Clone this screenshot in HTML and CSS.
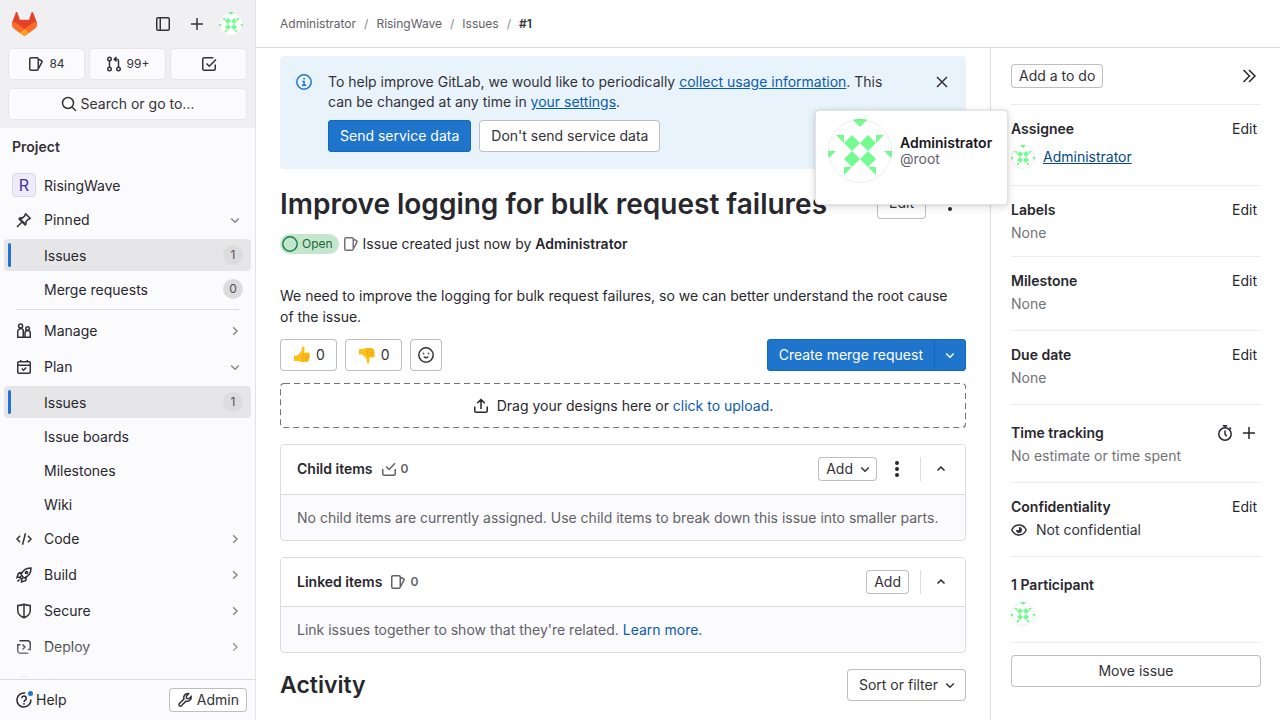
FILE: index.html
```html
<!DOCTYPE html>
<html lang="en">
<head>
<meta charset="utf-8">
<title>Improve logging for bulk request failures (#1) · Issues · RisingWave</title>
<link rel="stylesheet" href="styles.css">
</head>
<body>
<svg class="defs" aria-hidden="true">
  <symbol id="logo" viewBox="0 0 25 24"><path d="m24.507 9.5-.034-.09L21.082.562a.896.896 0 0 0-1.694.091l-2.29 7.01H7.825L5.535.653a.898.898 0 0 0-1.694-.09L.451 9.411.416 9.5a6.297 6.297 0 0 0 2.09 7.278l.012.01.03.022 5.16 3.867 2.56 1.935 1.554 1.176a1.051 1.051 0 0 0 1.268 0l1.555-1.176 2.56-1.935 5.197-3.89.014-.01A6.297 6.297 0 0 0 24.507 9.5Z" fill="#E24329"/><path d="m24.507 9.5-.034-.09a11.44 11.44 0 0 0-4.56 2.051l-7.447 5.632 4.742 3.584 5.197-3.89.014-.01A6.297 6.297 0 0 0 24.507 9.5Z" fill="#FC6D26"/><path d="m7.707 20.677 2.56 1.935 1.555 1.176a1.051 1.051 0 0 0 1.268 0l1.555-1.176 2.56-1.935-4.743-3.584-4.755 3.584Z" fill="#FCA326"/><path d="M5.01 11.461a11.43 11.43 0 0 0-4.56-2.05L.416 9.5a6.297 6.297 0 0 0 2.09 7.278l.012.01.03.022 5.16 3.867 4.745-3.584-7.444-5.632Z" fill="#FC6D26"/></symbol>
  <symbol id="identicon" viewBox="0 0 64 64"><path fill="#fff" d="M0 0h64v64H0z"/><path fill="#73fa91" d="M24 0h16l-8 8zM8 16h8v8zM48 16h8l-8 8zM24 16l8 8-8 8-8-8zM40 16l8 8-8 8-8-8zM24 32l8 8-8 8-8-8zM40 32l8 8-8 8-8-8zM0 32h8l-8 8zM56 32h8v8zM16 48h8l-8 8zM40 48h8v8z"/></symbol>
  <symbol id="sidebar" viewBox="0 0 16 16"><rect x="1.75" y="1.75" width="12.5" height="12.5" rx="1.25"/><path d="M5.25 2v12"/></symbol>
  <symbol id="plus" viewBox="0 0 16 16"><path d="M8 2v12M2 8h12"/></symbol>
  <symbol id="issues" viewBox="0 0 16 16"><rect x="1.75" y="1.75" width="8.5" height="12.5" rx="1.25"/><path d="M10.5 3.2l3.100 1.500a.8.8 0 0 1 .4 1.100l-3.400 6.700"/></symbol>
  <symbol id="merge" viewBox="0 0 16 16"><circle cx="3.5" cy="3" r="1.75"/><circle cx="3.5" cy="13" r="1.75"/><circle cx="12.5" cy="13" r="1.75"/><path d="M3.5 4.75v6.5M12.5 11.250V5a1.750 1.750 0 0 0-1.750-1.750H8.500M10.500 1L8.250 3.250l2.250 2.250"/></symbol>
  <symbol id="todo" viewBox="0 0 16 16"><path d="M14.25 8.500v4.250a1.500 1.500 0 0 1-1.500 1.500h-9.500a1.500 1.500 0 0 1-1.500-1.500v-9.500a1.500 1.500 0 0 1 1.500-1.500h9M5.500 7.500l2.750 2.750L15 3.500"/></symbol>
  <symbol id="search" viewBox="0 0 16 16"><circle cx="7" cy="7" r="5.500"/><path d="M11 11l4 4"/></symbol>
  <symbol id="pin" viewBox="0 0 16 16"><path d="M1 15l4.500-4.500M9.700 1.900l4.400 4.400-1.300.9-.6 0-2.300 2.600.2 2.100-1 1-6-6 1-1 2.100.2L8.800 3.800V3zM4.200 7l4.800 4.800"/></symbol>
  <symbol id="manage" viewBox="0 0 16 16"><path d="M1.750 14.250V8.500a3 3 0 0 1 5.500-1.600v7.350zM9 14.250V10a2.620 2.620 0 0 1 5.250 0v4.250zM7.250 14.250H9"/><circle cx="4.600" cy="3" r="2"/><circle cx="11.600" cy="5.500" r="1.800"/></symbol>
  <symbol id="plan" viewBox="0 0 16 16"><rect x="1.750" y="2.750" width="12.500" height="11.500" rx="1"/><path d="M2 6.250h12M4.750 1v2M11.250 1v2M5.750 9.500l1.750 1.700 2.800-2.700"/></symbol>
  <symbol id="code" viewBox="0 0 16 16"><path d="M9.500 2.200l-3 11.600M4.100 4.800L1 8l3.100 3.200M11.900 4.800L15 8l-3.100 3.200"/></symbol>
  <symbol id="rocket" viewBox="0 0 16 16"><path d="M15 1c-5-.2-8 2-10 6.800L8.200 11C13 9 15.200 6 15 1zM6 5.600L2.500 6.200 1 10.500l3.200-.5M10.400 10l-.6 3.500L5.500 15l.2-3.200M4.500 9v2.500H7M1.500 14.500l2-2"/><circle cx="10.500" cy="5.500" r="1.100"/></symbol>
  <symbol id="shield" viewBox="0 0 16 16"><path d="M8 1.250c2 .9 4 1.150 6.250 1.250v5c0 3.500-2.250 5.700-6.250 7.250C4 13.200 1.750 11 1.750 7.500v-5C4 2.400 6 2.150 8 1.250zM8 1.500v13"/></symbol>
  <symbol id="deploy" viewBox="0 0 16 16"><path d="M3.500 1.750h8.250a2.500 2.500 0 0 1 2.500 2.500v6.250h-2.500M12.250 14.250h-8a2.500 2.500 0 0 1-2.500-2.500V5.750h2.750M6.500 5.500L9 8l-2.500 2.500"/></symbol>
  <symbol id="operate" viewBox="0 0 16 16"><circle cx="8" cy="8" r="6.250"/></symbol>
  <symbol id="help" viewBox="0 0 16 16"><path d="M9.200 1.100A7 7 0 1 0 14.900 7.500M5.750 6.250a2.250 2.250 0 1 1 3.500 1.850C8.400 8.700 8 9 8 9.900"/><path d="M8 11.100v1.600"/></symbol>
  <symbol id="wrench" viewBox="0 0 16 16"><path d="M10.800 1.600a4.100 4.100 0 0 0-3.900 5.400l-4.700 4.700a1.500 1.500 0 0 0 2.100 2.100L9 9.100a4.100 4.100 0 0 0 5.200-4.600l-2.400 2.200-2.200-.3-.3-2.200 2.200-2.400z"/></symbol>
  <symbol id="down" viewBox="0 0 16 16"><path d="M4.200 6.500L8 10.200l3.800-3.700"/></symbol>
  <symbol id="up" viewBox="0 0 16 16"><path d="M4.500 9.500L8 6l3.500 3.500"/></symbol>
  <symbol id="right" viewBox="0 0 16 16"><path d="M6.200 4.200L10 8l-3.800 3.800"/></symbol>
  <symbol id="collapse" viewBox="0 0 16 16"><path d="M2.500 2l6 6-6 6M8 2l6 6-6 6"/></symbol>
  <symbol id="info" viewBox="0 0 16 16"><circle cx="8" cy="8" r="7.200"/><path d="M6.400 7.500H8.100v3.600M6 11.250h4.200M7.300 4.700h1.600"/></symbol>
  <symbol id="close" viewBox="0 0 16 16"><path d="M3 3l10 10M13 3L3 13"/></symbol>
  <symbol id="dots" viewBox="0 0 16 16"><g fill="currentColor" stroke="none"><circle cx="8" cy="2" r="2"/><circle cx="8" cy="8" r="2"/><circle cx="8" cy="14" r="2"/></g></symbol>
  <symbol id="open" viewBox="0 0 16 16"><circle cx="8" cy="8" r="7.200"/></symbol>
  <symbol id="smiley" viewBox="0 0 16 16"><circle cx="8" cy="8" r="7.200"/><path d="M6 9.500c.6 1.700 3.400 1.700 4 0M5.500 5.700v1.600M10.500 5.700v1.600"/></symbol>
  <symbol id="upload" viewBox="0 0 16 16"><path d="M1.750 8.500v4.250a1.500 1.500 0 0 0 1.500 1.500h9.500a1.500 1.500 0 0 0 1.500-1.500V8.500M8 11V1.800M4.200 5.300L8 1.500l3.800 3.800"/></symbol>
  <symbol id="task" viewBox="0 0 16 16"><path d="M1.750 8v4.750a1.500 1.500 0 0 0 1.500 1.500h9.500a1.500 1.500 0 0 0 1.500-1.500V8M5.200 5.500l3 3L14 2.300"/></symbol>
  <symbol id="timer" viewBox="0 0 16 16"><circle cx="8" cy="9" r="6.200"/><path d="M5.750.800h4.500M8 1v1.800M12.500 2.500l1.600 1.500M8 5.500V9l1.600 2.200"/></symbol>
  <symbol id="eye" viewBox="0 0 16 16"><path d="M.800 8C3.900 1.400 12.100 1.400 15.200 8c-3.100 6.600-11.300 6.600-14.400 0z"/><path fill="currentColor" stroke="none" d="M8 5a3 3 0 1 1-3 3h3z"/></symbol>
  <symbol id="thumb" viewBox="0 0 18 18"><path fill="#fcc21b" d="M1 9.500h3.500L8.500 5 9 1.200c.2-1.200 2.200-1 2.500.5.300 1.700 0 3.300-.5 4.800h4.500c1.400 0 1.700 1.700.8 2.400 1 .5.900 2-.1 2.400.7.700.5 2-.5 2.300.4 1.200-.5 2.400-1.700 2.400H8L5 15H1z"/><path fill="none" stroke="#f0a010" stroke-width="1" d="M11.500 9.100h4.600M11.500 11.600h4.300M11.500 13.900h3.900M10.500 6.800c-1.300 2-1 6-.2 8.700"/></symbol>
</svg>

<div class="app">
  <aside class="sidebar" aria-label="Primary navigation">
    <div class="top">
      <div class="brand">
        <a href="#" aria-label="Homepage" class="home"><svg class="logo"><use href="#logo"/></svg></a>
        <button class="bare" aria-label="Hide sidebar"><svg class="icon"><use href="#sidebar"/></svg></button>
        <button class="bare" aria-label="Create new"><svg class="icon"><use href="#plus"/></svg></button>
        <button class="bare" aria-label="User menu"><svg class="avatar"><use href="#identicon"/></svg></button>
      </div>
      <div class="counters">
        <a href="#" class="counter" aria-label="Assigned issues"><svg class="icon"><use href="#issues"/></svg>84</a>
        <a href="#" class="counter" aria-label="Merge requests"><svg class="icon"><use href="#merge"/></svg>99+</a>
        <a href="#" class="counter" aria-label="To-Do list"><svg class="icon"><use href="#todo"/></svg></a>
      </div>
      <button class="search"><svg class="icon"><use href="#search"/></svg>Search or go to…</button>
    </div>
    <nav class="nav">
      <h2 class="context">Project</h2>
      <a href="#" class="item project"><span class="letter">R</span><span class="label">RisingWave</span></a>
      <div class="group expanded">
        <button class="item"><svg class="icon"><use href="#pin"/></svg><span class="label">Pinned</span><svg class="icon chev"><use href="#down"/></svg></button>
        <div class="sub">
          <a href="#" class="item child active"><span class="label">Issues</span><span class="pill">1</span></a>
          <a href="#" class="item child"><span class="label">Merge requests</span><span class="pill">0</span></a>
        </div>
      </div>
      <hr class="rule">
      <div class="group"><button class="item"><svg class="icon"><use href="#manage"/></svg><span class="label">Manage</span><svg class="icon chev"><use href="#right"/></svg></button></div>
      <div class="group expanded">
        <button class="item"><svg class="icon"><use href="#plan"/></svg><span class="label">Plan</span><svg class="icon chev"><use href="#down"/></svg></button>
        <div class="sub">
          <a href="#" class="item child active"><span class="label">Issues</span><span class="pill">1</span></a>
          <a href="#" class="item child"><span class="label">Issue boards</span></a>
          <a href="#" class="item child"><span class="label">Milestones</span></a>
          <a href="#" class="item child"><span class="label">Wiki</span></a>
        </div>
      </div>
      <div class="group"><button class="item"><svg class="icon"><use href="#code"/></svg><span class="label">Code</span><svg class="icon chev"><use href="#right"/></svg></button></div>
      <div class="group"><button class="item"><svg class="icon"><use href="#rocket"/></svg><span class="label">Build</span><svg class="icon chev"><use href="#right"/></svg></button></div>
      <div class="group"><button class="item"><svg class="icon"><use href="#shield"/></svg><span class="label">Secure</span><svg class="icon chev"><use href="#right"/></svg></button></div>
      <div class="group"><button class="item"><svg class="icon"><use href="#deploy"/></svg><span class="label">Deploy</span><svg class="icon chev"><use href="#right"/></svg></button></div>
      <div class="group"><button class="item"><svg class="icon"><use href="#operate"/></svg><span class="label">Operate</span><svg class="icon chev"><use href="#right"/></svg></button></div>
    </nav>
    <div class="foot">
      <button class="bare help"><svg class="icon"><use href="#help"/></svg>Help<span class="dot"></span></button>
      <a href="#" class="btn small"><svg class="icon"><use href="#wrench"/></svg>Admin</a>
    </div>
  </aside>

  <div class="page">
    <header class="topbar">
      <nav aria-label="Breadcrumbs"><ol class="crumbs">
        <li><a href="#">Administrator</a></li><li><a href="#">RisingWave</a></li><li><a href="#">Issues</a></li><li><a href="#" class="here">#1</a></li>
      </ol></nav>
    </header>
    <div class="columns">
      <main class="main">
        <section class="alert">
          <svg class="icon"><use href="#info"/></svg>
          <div class="alert-body">
            <p>To help improve GitLab, we would like to periodically <a href="#">collect usage information</a>. This can be changed at any time in <a href="#">your settings</a>.</p>
            <div class="actions"><button class="btn primary">Send service data</button><button class="btn">Don't send service data</button></div>
          </div>
          <button class="bare" aria-label="Dismiss"><svg class="icon"><use href="#close"/></svg></button>
        </section>

        <div class="title-row">
          <h1>Improve logging for bulk request failures</h1>
          <button class="btn">Edit</button>
          <button class="bare more" aria-label="Issue actions"><svg class="icon"><use href="#dots"/></svg></button>
        </div>
        <div class="meta">
          <span class="badge"><svg class="icon"><use href="#open"/></svg>Open</span>
          <svg class="icon muted"><use href="#issues"/></svg>
          <span>Issue created just now by <a href="#" class="author">Administrator</a></span>
        </div>
        <p class="description">We need to improve the logging for bulk request failures, so we can better understand the root cause of the issue.</p>

        <div class="awards">
          <button class="btn award" aria-label="Thumbs up"><svg class="thumb"><use href="#thumb"/></svg>0</button>
          <button class="btn award" aria-label="Thumbs down"><svg class="thumb flipped"><use href="#thumb"/></svg>0</button>
          <button class="btn square" aria-label="Add reaction"><svg class="icon"><use href="#smiley"/></svg></button>
          <div class="split"><button class="btn primary">Create merge request</button><button class="btn primary toggle" aria-label="More options"><svg class="icon"><use href="#down"/></svg></button></div>
        </div>

        <div class="drop">
          <svg class="dashes" aria-hidden="true"><rect width="100%" height="100%" rx="4"/></svg>
          <svg class="icon"><use href="#upload"/></svg>
          <span>Drag your designs here or <a href="#">click to upload</a>.</span>
        </div>

        <section class="card">
          <header class="card-head">
            <h2>Child items</h2><span class="count"><svg class="icon"><use href="#task"/></svg>0</span>
            <div class="card-tools">
              <button class="btn small">Add<svg class="icon"><use href="#down"/></svg></button>
              <button class="bare more" aria-label="Child item options"><svg class="icon"><use href="#dots"/></svg></button>
              <div class="fold"><button class="bare" aria-label="Collapse child items"><svg class="icon"><use href="#up"/></svg></button></div>
            </div>
          </header>
          <p class="card-body">No child items are currently assigned. Use child items to break down this issue into smaller parts.</p>
        </section>

        <section class="card">
          <header class="card-head linked">
            <h2>Linked items</h2><span class="count"><svg class="icon"><use href="#issues"/></svg>0</span>
            <div class="card-tools">
              <button class="btn small">Add</button>
              <div class="fold"><button class="bare" aria-label="Collapse linked items"><svg class="icon"><use href="#up"/></svg></button></div>
            </div>
          </header>
          <p class="card-body">Link issues together to show that they're related. <a href="#">Learn more.</a></p>
        </section>

        <div class="activity">
          <h2>Activity</h2>
          <button class="btn sort">Sort or filter<svg class="icon"><use href="#down"/></svg></button>
        </div>
      </main>

      <aside class="details" aria-label="Issue details">
        <div class="block head"><button class="btn small">Add a to do</button><button class="bare" aria-label="Collapse sidebar"><svg class="icon"><use href="#collapse"/></svg></button></div>
        <section class="block assignee">
          <div class="block-title"><h3>Assignee</h3><button class="bare">Edit</button></div>
          <a href="#" class="user"><svg class="avatar"><use href="#identicon"/></svg><span>Administrator</span></a>
          <div class="popover" role="tooltip">
            <svg class="avatar large"><use href="#identicon"/></svg>
            <div><strong>Administrator</strong><span class="handle">@root</span></div>
          </div>
        </section>
        <section class="block labels"><div class="block-title"><h3>Labels</h3><button class="bare">Edit</button></div><p class="none">None</p></section>
        <section class="block"><div class="block-title"><h3>Milestone</h3><button class="bare">Edit</button></div><p class="none">None</p></section>
        <section class="block"><div class="block-title"><h3>Due date</h3><button class="bare">Edit</button></div><p class="none">None</p></section>
        <section class="block roomy"><div class="block-title"><h3>Time tracking</h3><span class="pair"><button class="bare" aria-label="Set estimate"><svg class="icon"><use href="#timer"/></svg></button><button class="bare" aria-label="Add time entry"><svg class="icon"><use href="#plus"/></svg></button></span></div><p class="none">No estimate or time spent</p></section>
        <section class="block"><div class="block-title"><h3>Confidentiality</h3><button class="bare">Edit</button></div><p class="privacy"><svg class="icon"><use href="#eye"/></svg>Not confidential</p></section>
        <section class="block roomy"><div class="block-title"><h3>1 Participant</h3></div><a href="#" class="user" aria-label="Administrator"><svg class="avatar"><use href="#identicon"/></svg></a></section>
        <div class="move"><button class="btn">Move issue</button></div>
      </aside>
    </div>
  </div>
</div>
</body>
</html>
```
FILE: styles.css
```css
* { box-sizing: border-box; }

body {
  margin: 0;
  font-family: Inter, "Noto Sans", sans-serif;
  font-size: 14px;
  line-height: 20px;
  color: #28272d;
  background: #fff;
}

h1, h2, h3, p, ol { margin: 0; padding: 0; }
h2, h3 { font-size: 14px; line-height: 20px; font-weight: 600; }
a { color: #0b5cad; text-decoration: none; }
button { font: inherit; color: inherit; cursor: pointer; }

.defs { position: absolute; width: 0; height: 0; }

.icon {
  width: 16px;
  height: 16px;
  flex: none;
  display: block;
  fill: none;
  stroke: currentColor;
  stroke-width: 1.5;
  overflow: visible;
}

.avatar {
  display: block;
  flex: none;
  width: 24px;
  height: 24px;
  border-radius: 50%;
  outline: 1px solid rgba(31, 30, 36, 0.08);
  outline-offset: -1px;
}
.avatar.large { width: 64px; height: 64px; }

.bare {
  display: flex;
  align-items: center;
  justify-content: center;
  padding: 0;
  border: 0;
  background: none;
}

.btn {
  display: inline-flex;
  align-items: center;
  justify-content: center;
  height: 32px;
  padding: 0 12px;
  border: 0;
  border-radius: 4px;
  box-shadow: inset 0 0 0 1px #bfbfc3;
  background: #fff;
  color: #333238;
  white-space: nowrap;
}
.btn.small { height: 24px; padding: 0 8px; gap: 4px; }
.btn.primary { background: #1f75cb; color: #fff; box-shadow: inset 0 0 0 1px #1068bf; }

.app { display: flex; min-height: 100vh; }

/* Navigation sidebar */
.sidebar {
  position: sticky;
  top: 0;
  flex: none;
  display: flex;
  flex-direction: column;
  width: 256px;
  height: 100vh;
  border-right: 1px solid #e3e3e6;
  background: #fbfafd;
}
.top { display: flex; flex-direction: column; gap: 8px; padding: 8px; background: #f0f0f2; color: #333238; }
.brand { display: flex; align-items: center; height: 32px; gap: 2px; padding: 0 0 0 4px; }
.brand .bare { width: 32px; height: 32px; }
.home { margin-right: auto; }
.logo { display: block; width: 25px; height: 24px; }
.counters { display: grid; grid-template-columns: repeat(3, 1fr); gap: 4px; }
.counter, .search {
  display: flex;
  align-items: center;
  justify-content: center;
  height: 32px;
  border: 1px solid #e6e6e9;
  border-radius: 4px;
  background: #fbfafd;
  color: #333238;
}
.counter { gap: 5px; font-size: 12px; }
.search { gap: 4px; padding: 0; }

.nav { position: relative; flex: 1; min-height: 0; overflow: hidden; padding: 9px 4px 0; }
.nav::after {
  content: "";
  position: absolute;
  left: 0;
  right: 0;
  bottom: 0;
  height: 40px;
  background: linear-gradient(to top, #fbfafd, rgba(251, 250, 253, 0));
}
.context { padding: 0 8px; margin-bottom: 12px; color: #333238; }
.item {
  display: flex;
  align-items: center;
  gap: 12px;
  width: 100%;
  height: 32px;
  padding: 0 8px 0 12px;
  border: 0;
  border-radius: 4px;
  background: none;
  color: #28272d;
  text-align: left;
}
.item .icon { color: #333238; }
.item .label { flex: 1; }
.item .chev { color: #89888d; }
.project { gap: 8px; padding-left: 8px; margin-bottom: 3px; }
.child .label, .project .label { padding-top: 2px; }
.letter {
  display: flex;
  align-items: center;
  justify-content: center;
  width: 24px;
  height: 24px;
  border: 1px solid #dcd5ec;
  border-radius: 4px;
  background: #eeebfa;
  color: #41349b;
  font-size: 16px;
}
.group { margin-bottom: 4px; }
.group.expanded { margin-bottom: 3px; }
.sub { display: flex; flex-direction: column; gap: 2px; margin-top: 3px; }
.child { padding-left: 4px; gap: 0; }
.child::before { content: ""; width: 3px; height: 24px; margin-right: 33px; border-radius: 2px; }
.active { background: #e6e6e8; }
.active::before { background: #1f75cb; }
.pill {
  min-width: 20px;
  height: 20px;
  border-radius: 10px;
  background: #dcdcde;
  color: #535158;
  font-size: 12px;
  text-align: center;
}
.rule { height: 1px; margin: 4px 12px 5px; border: 0; background: #dcdcde; }

.foot {
  display: flex;
  align-items: center;
  justify-content: space-between;
  height: 41px;
  padding: 0 8px 0 16px;
  border-top: 1px solid #dcdcde;
}
.help { position: relative; gap: 4px; }
.dot { position: absolute; left: 12px; top: 1px; width: 5px; height: 5px; border-radius: 50%; background: #1f75cb; }

/* Page frame */
.page { flex: 1; min-width: 0; display: flex; flex-direction: column; }
.topbar { display: flex; align-items: center; height: 48px; padding: 0 24px; border-bottom: 1px solid #dcdcde; }
.crumbs { display: flex; list-style: none; font-size: 12px; }
.crumbs a { color: #626168; }
.crumbs .here { color: #333238; font-weight: 600; }
.crumbs li + li::before { content: "/"; margin: 0 8px; color: #89888d; }
.columns { flex: 1; display: flex; }
.main { flex: 1; min-width: 0; padding: 8px 24px 16px; }

/* Service data notice */
.alert { display: flex; align-items: flex-start; gap: 16px; padding: 16px; border-radius: 4px; background: #e9f3fc; color: #333238; }
.alert > .icon { margin-top: 2px; color: #1f75cb; }
.alert > .bare { width: 16px; height: 20px; }
.alert-body { flex: 1; min-width: 0; padding-right: 16px; }
.alert-body a { color: #0b5cad; text-decoration: underline; }
.alert-body .actions { display: flex; gap: 8px; margin: 8px 0 1px; }

/* Issue heading */
.title-row { display: flex; align-items: flex-start; gap: 8px; margin-top: 18px; }
h1 { flex: 1; font-size: 28px; line-height: 34px; font-weight: 600; }
.more { width: 32px; height: 32px; }
.meta { display: flex; align-items: center; gap: 4px; margin-top: 13px; }
.author { color: #28272d; font-weight: 600; }
.badge { display: flex; align-items: center; gap: 4px; height: 20px; padding: 0 6px 0 2px; border-radius: 10px; background: #c3e6cd; color: #24663b; font-size: 12px; }
.badge .icon { color: #108548; }
.muted { color: #737278; }
.description { margin-top: 31px; padding-right: 4px; line-height: 21px; }

.awards { display: flex; gap: 8px; margin-top: 12px; }
.award { gap: 4px; }
.square { width: 32px; padding: 0; }
.thumb { width: 20px; height: 18px; }
.flipped { transform: scaleY(-1); }
.split { display: flex; margin-left: auto; }
.split .btn:first-child { border-radius: 4px 0 0 4px; }
.split .toggle { width: 32px; padding: 0; margin-left: -1px; border-radius: 0 4px 4px 0; }

.drop { position: relative; display: flex; align-items: center; justify-content: center; gap: 8px; height: 45px; margin-top: 12px; }
.dashes { position: absolute; inset: 0; width: 100%; height: 100%; border-radius: 4px; }
.dashes rect { fill: none; stroke: #737278; stroke-width: 2; stroke-dasharray: 6 4; }

/* Related item cards */
.card { margin-top: 16px; border: 1px solid #dcdcde; border-radius: 4px; background: #fbfafd; overflow: hidden; }
.card-head { display: flex; align-items: center; gap: 8px; padding: 12px 16px 13px; background: #fff; border-bottom: 1px solid #dcdcde; }
.card-head.linked { padding-bottom: 12px; }
.count { display: flex; align-items: center; gap: 4px; color: #626168; font-size: 12px; font-weight: 600; }
.card-tools { display: flex; align-items: center; margin-left: auto; }
.card-tools .btn { gap: 4px; }
.card-tools .btn .icon { margin-right: -4px; }
.card-tools .more { width: 24px; height: 24px; margin-left: 8px; }
.fold { display: flex; height: 24px; margin-left: 11px; padding-left: 8px; border-left: 1px solid #dcdcde; }
.fold .bare { width: 24px; margin-right: -4px; }
.card-body { padding: 13px 16px 12px; color: #626168; }

.activity { display: flex; align-items: center; justify-content: space-between; margin-top: 16px; }
.activity h2 { font-size: 23px; line-height: 28px; }
.sort { gap: 4px; padding-right: 8px; }

/* Issue details */
.details { flex: none; width: 290px; padding: 0 19px 16px 20px; border-left: 1px solid #dcdcde; }
.block { padding: 14px 0 16px; border-bottom: 1px solid #ececef; }
.block.head { display: flex; align-items: center; justify-content: space-between; padding: 16px 4px 16px 0; }
.block-title { display: flex; justify-content: space-between; padding-right: 4px; }
.none, .privacy { margin-top: 3px; }
.none { color: #737278; }
.labels { padding-bottom: 13px; }
.roomy { padding-top: 18px; }
.pair { display: flex; gap: 8px; }
.privacy { display: flex; align-items: center; gap: 9px; color: #333238; }
.user { display: flex; align-items: center; gap: 8px; width: max-content; margin-top: 6px; color: #064787; text-decoration: underline; }
.roomy .user { margin-top: 7px; }
.assignee { position: relative; }
.move { padding-top: 12px; }
.move .btn { width: 100%; }

.popover {
  position: absolute;
  top: 5px;
  right: calc(100% + 3px);
  display: flex;
  gap: 8px;
  width: 193px;
  height: 95px;
  padding: 8px 12px;
  border: 1px solid #e3e3e6;
  border-radius: 4px;
  background: #fff;
  box-shadow: 0 2px 8px rgba(31, 30, 36, 0.16), 0 0 2px rgba(31, 30, 36, 0.16);
  line-height: 16px;
}
.popover > div { padding-top: 16px; }
.popover strong { display: block; color: #18171d; font-weight: 600; }
.handle { color: #626168; }
```
